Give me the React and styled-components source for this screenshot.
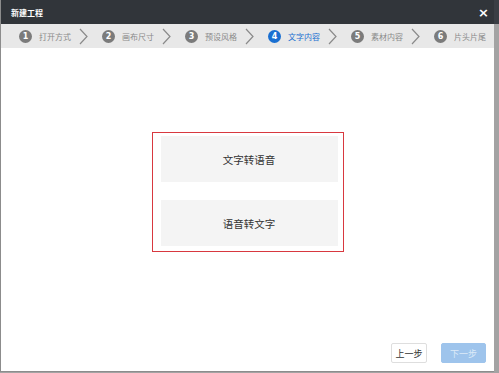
import React from "react";
import styled, { createGlobalStyle } from "styled-components";

const GlobalStyle = createGlobalStyle`
  html, body {
    margin: 0;
    padding: 0;
    background: #9a9a9a;
    font-family: "Noto Sans CJK SC", "Noto Sans", sans-serif;
  }
`;

const Page = styled.div`
  width: 499px;
  height: 373px;
  display: flex;
  background: linear-gradient(#3a3e44 0 24px, #a3a3a3 24px);
`;

const Dialog = styled.div`
  width: 493px;
  height: 371px;
  display: flex;
  flex-direction: column;
  background: #fff;
  border-left: 1px solid #8c8c8c;
  border-bottom: 1px solid #8c8c8c;
`;

const Header = styled.div`
  height: 24px;
  flex-shrink: 0;
  background: #31353a;
  display: flex;
  align-items: center;
  justify-content: space-between;
  padding: 0 5px 0 10px;
  color: #fff;
`;

const Title = styled.span`
  font-size: 8px;
  font-weight: bold;
`;

const Close = styled.span`
  font-family: "DejaVu Sans", sans-serif;
  font-size: 13px;
  font-weight: bold;
  line-height: 1;
`;

const Steps = styled.div`
  height: 24px;
  flex-shrink: 0;
  background: #e8e8e8;
  display: flex;
  align-items: center;
  padding-left: 18px;
`;

const Step = styled.div`
  display: flex;
  align-items: center;
  width: 83px;
  flex-shrink: 0;
`;

const Num = styled.span`
  width: 13px;
  height: 13px;
  border-radius: 50%;
  background: ${(p) => (p.$active ? "#1a6fd1" : "#7b7b7b")};
  color: #fff;
  font-family: "DejaVu Sans", sans-serif;
  font-size: 8px;
  font-weight: bold;
  display: flex;
  align-items: center;
  justify-content: center;
  flex-shrink: 0;
`;

const Label = styled.span`
  margin-left: 7px;
  font-size: 8px;
  color: ${(p) => (p.$active ? "#1a6fd1" : "#8a8a8a")};
  width: 38px;
  flex-shrink: 0;
  white-space: nowrap;
`;

const Chevron = styled.svg`
  margin-left: 2px;
  flex-shrink: 0;
`;

const Content = styled.div`
  flex: 1;
  display: flex;
  align-items: center;
  justify-content: center;
  padding-top: 1px;
`;

const Box = styled.div`
  width: 192px;
  box-sizing: border-box;
  border: 1px solid #d8383f;
  padding: 3px 5px 5px 8px;
  display: flex;
  flex-direction: column;
  gap: 18px;
`;

const Choice = styled.div`
  height: 46px;
  background: #f4f4f4;
  display: flex;
  align-items: center;
  justify-content: center;
  font-size: 10.5px;
  color: #333;
`;

const Footer = styled.div`
  height: 36px;
  flex-shrink: 0;
  display: flex;
  align-items: center;
  justify-content: flex-end;
  gap: 14px;
  padding-right: 8px;
`;

const Button = styled.div`
  height: 20px;
  width: ${(p) => p.$w}px;
  box-sizing: border-box;
  display: flex;
  align-items: center;
  justify-content: center;
  font-size: 9px;
  border-radius: 2px;
  border: 1px solid ${(p) => (p.$primary ? "#9ec4ec" : "#dedede")};
  background: ${(p) => (p.$primary ? "#9ec4ec" : "#fff")};
  color: ${(p) => (p.$primary ? "#dceaf8" : "#333")};
`;

const steps = ["打开方式", "画布尺寸", "预设风格", "文字内容", "素材内容", "片头片尾"];

export default function App() {
  return (
    <Page>
      <GlobalStyle />
      <Dialog>
        <Header>
          <Title>新建工程</Title>
          <Close>×</Close>
        </Header>
        <Steps>
          {steps.map((s, i) => (
            <Step key={s}>
              <Num $active={i === 3}>{i + 1}</Num>
              <Label $active={i === 3}>{s}</Label>
              {i < steps.length - 1 && (
                <Chevron width="9" height="17" viewBox="0 0 9 17">
                  <polyline points="1,1 8,8.5 1,16" fill="none" stroke="#8a8a8a" strokeWidth="1.2" />
                </Chevron>
              )}
            </Step>
          ))}
        </Steps>
        <Content>
          <Box>
            <Choice>文字转语音</Choice>
            <Choice>语音转文字</Choice>
          </Box>
        </Content>
        <Footer>
          <Button $w={36}>上一步</Button>
          <Button $w={45} $primary>下一步</Button>
        </Footer>
      </Dialog>
    </Page>
  );
}
